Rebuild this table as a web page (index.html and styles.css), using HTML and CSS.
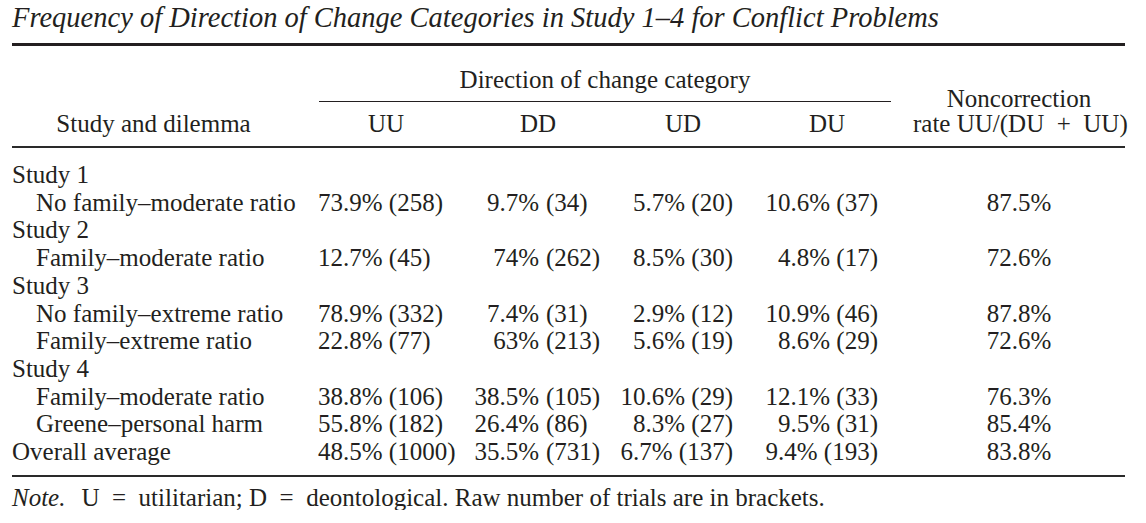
FILE: index.html
```html
<!DOCTYPE html>
<html lang="en">
<head>
<meta charset="utf-8">
<title>Frequency of Direction of Change Categories</title>
<link rel="stylesheet" href="styles.css">
</head>
<body>
<div class="page">
  <div class="title">Frequency of Direction of Change Categories in Study 1–4 for Conflict Problems</div>
  <div class="table">
    <div class="thead">
      <div class="spanner">Direction of change category</div>
      <div class="hcell stub">Study and dilemma</div>
      <div class="hcell c2">UU</div>
      <div class="hcell c3">DD</div>
      <div class="hcell c4">UD</div>
      <div class="hcell c5">DU</div>
      <div class="hcell rate">Noncorrection<br>rate UU/(DU&#8194;+&#8194;UU)</div>
    </div>
    <div class="tbody">
      <div class="row"><div class="label group">Study 1</div></div>
      <div class="row">
        <div class="label sub">No family–moderate ratio</div>
        <div class="uu">73.9% (258)</div>
        <div class="dd"><span class="pct">9.7%</span><span>(34)</span></div>
        <div class="ud">5.7% (20)</div>
        <div class="du">10.6% (37)</div>
        <div class="nc">87.5%</div>
      </div>
      <div class="row"><div class="label group">Study 2</div></div>
      <div class="row">
        <div class="label sub">Family–moderate ratio</div>
        <div class="uu">12.7% (45)</div>
        <div class="dd"><span class="pct">74%</span><span>(262)</span></div>
        <div class="ud">8.5% (30)</div>
        <div class="du">4.8% (17)</div>
        <div class="nc">72.6%</div>
      </div>
      <div class="row"><div class="label group">Study 3</div></div>
      <div class="row">
        <div class="label sub">No family–extreme ratio</div>
        <div class="uu">78.9% (332)</div>
        <div class="dd"><span class="pct">7.4%</span><span>(31)</span></div>
        <div class="ud">2.9% (12)</div>
        <div class="du">10.9% (46)</div>
        <div class="nc">87.8%</div>
      </div>
      <div class="row">
        <div class="label sub">Family–extreme ratio</div>
        <div class="uu">22.8% (77)</div>
        <div class="dd"><span class="pct">63%</span><span>(213)</span></div>
        <div class="ud">5.6% (19)</div>
        <div class="du">8.6% (29)</div>
        <div class="nc">72.6%</div>
      </div>
      <div class="row"><div class="label group">Study 4</div></div>
      <div class="row">
        <div class="label sub">Family–moderate ratio</div>
        <div class="uu">38.8% (106)</div>
        <div class="dd"><span class="pct">38.5%</span><span>(105)</span></div>
        <div class="ud">10.6% (29)</div>
        <div class="du">12.1% (33)</div>
        <div class="nc">76.3%</div>
      </div>
      <div class="row">
        <div class="label sub">Greene–personal harm</div>
        <div class="uu">55.8% (182)</div>
        <div class="dd"><span class="pct">26.4%</span><span>(86)</span></div>
        <div class="ud">8.3% (27)</div>
        <div class="du">9.5% (31)</div>
        <div class="nc">85.4%</div>
      </div>
      <div class="row">
        <div class="label group">Overall average</div>
        <div class="uu">48.5% (1000)</div>
        <div class="dd"><span class="pct">35.5%</span><span>(731)</span></div>
        <div class="ud">6.7% (137)</div>
        <div class="du">9.4% (193)</div>
        <div class="nc">83.8%</div>
      </div>
    </div>
  </div>
  <div class="note"><span class="note-label">Note.</span>U&#8194;=&#8194;utilitarian; D&#8194;=&#8194;deontological. Raw number of trials are in brackets.</div>
</div>
</body>
</html>
```

FILE: styles.css
```css
html, body {
  margin: 0;
  padding: 0;
  background: #ffffff;
}

body {
  font-family: "Liberation Serif", "Times New Roman", serif;
  color: #231f20;
}

.page {
  width: 1113px;
  padding: 1px 0 0 12px;
}

.title {
  font-style: italic;
  font-size: 28.5px;
  line-height: 34px;
  white-space: nowrap;
}

.table {
  margin-top: 8px;
  border-top: 3px solid #231f20;
  border-bottom: 2px solid #2a2a2a;
  font-size: 25px;
}

.thead,
.row {
  display: grid;
  grid-template-columns: 298px 152px 152px 138px 161px 212px;
}

.thead {
  grid-template-rows: 56px 44px;
  border-bottom: 2px solid #2a2a2a;
}

.spanner {
  grid-column: 2 / 6;
  grid-row: 1;
  margin: 0 22px 0 9px;
  padding: 21px 0 9px;
  line-height: 25px;
  text-align: center;
  border-bottom: 1px solid #231f20;
}

.hcell {
  grid-row: 2;
  padding: 9px 0 10px;
  line-height: 25px;
  text-align: center;
  white-space: nowrap;
}

.hcell.stub {
  grid-column: 1;
  padding-right: 15px;
}

.hcell.c2 { grid-column: 2; }
.hcell.c3 { grid-column: 3; }
.hcell.c4 { grid-column: 4; }
.hcell.c5 { grid-column: 5; padding-right: 11px; }

.hcell.rate {
  grid-column: 6;
  grid-row: 1 / 3;
  align-self: end;
}

.tbody {
  padding: 13px 0 9px;
}

.row {
  line-height: 27.7px;
  white-space: nowrap;
}

.label.group {
  grid-column: 1;
}

.label.sub {
  grid-column: 1;
  padding-left: 24px;
}

.uu {
  grid-column: 2;
  padding-left: 8px;
}

.dd {
  grid-column: 3;
  display: flex;
  gap: 7px;
}

.dd .pct {
  width: 77px;
  text-align: right;
}

.ud {
  grid-column: 4;
  text-align: right;
  padding-right: 19px;
}

.du {
  grid-column: 5;
  text-align: right;
  padding-right: 35px;
}

.nc {
  grid-column: 6;
  text-align: center;
}

.note {
  margin-top: 8px;
  font-size: 25px;
  line-height: 25px;
  white-space: nowrap;
}

.note-label {
  font-style: italic;
  margin-right: 16px;
}
```
